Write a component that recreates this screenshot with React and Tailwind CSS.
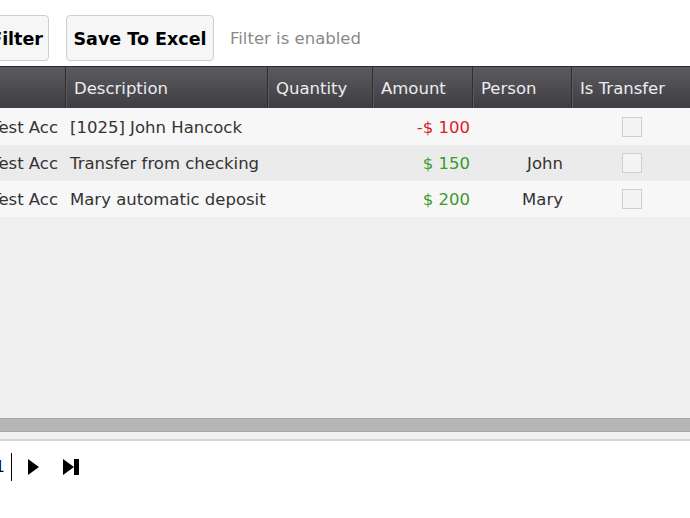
const font = "font-['Tahoma','DejaVu_Sans',sans-serif]";

const rows = [
  { account: "Test Acc", desc: "[1025] John Hancock", amount: "-$ 100", neg: true, person: "" },
  { account: "Test Acc", desc: "Transfer from checking", amount: "$ 150", neg: false, person: "John" },
  { account: "Test Acc", desc: "Mary automatic deposit", amount: "$ 200", neg: false, person: "Mary" },
];

function HeadCell({ w, children }) {
  return (
    <div className={`${w} h-full shrink-0 flex items-center pl-[7px] pt-[3px] border-l border-l-[#5c5c60] border-r border-r-[#2e2e32] text-[#ececf0]`}>
      {children}
    </div>
  );
}

export default function App() {
  return (
    <div className={`w-[690px] h-[518px] overflow-hidden bg-white ${font} text-[16.5px]`}>
      <div className="-ml-[35px]">
        {/* toolbar */}
        <div className="flex items-center h-[66px] pt-[9px]">
          <button className="w-[84px] h-[46px] rounded-[4px] border border-[#cfcfcf] bg-[#f6f6f6] font-bold text-[17.5px] text-black pr-[5px] pt-[3px] text-right">
            Filter
          </button>
          <button className="ml-[17px] w-[148px] h-[46px] rounded-[4px] border border-[#cfcfcf] bg-[#f6f6f6] font-bold text-[17.5px] text-black pt-[3px]">
            Save To Excel
          </button>
          <span className="ml-[16px] pt-[3px] text-[#8a8a8a]">Filter is enabled</span>
        </div>

        {/* grid */}
        <div className="bg-[#f0f0f0] h-[375px] flex flex-col border-t border-[#2a2a2e]">
          <div className="flex h-[41px] bg-gradient-to-b from-[#5b5b60] to-[#3e3e42]">
            <HeadCell w="w-[101px]"></HeadCell>
            <HeadCell w="w-[202px]">Description</HeadCell>
            <HeadCell w="w-[105px]">Quantity</HeadCell>
            <HeadCell w="w-[100px]">Amount</HeadCell>
            <HeadCell w="w-[99px]">Person</HeadCell>
            <HeadCell w="w-[160px]">Is Transfer</HeadCell>
          </div>
          {rows.map((r, i) => (
            <div key={i} className={`flex items-center text-[#333] ${i % 2 ? "bg-[#ebebeb]" : "bg-[#f7f7f7]"} ${i === 0 ? "h-[37px] pt-[3px]" : "h-[36px] pt-[2px]"}`}>
              <div className="w-[101px] shrink-0 text-right pr-[8px] whitespace-nowrap overflow-hidden">{r.account}</div>
              <div className="w-[202px] shrink-0 pl-[4px] whitespace-nowrap">{r.desc}</div>
              <div className="w-[105px] shrink-0"></div>
              <div className={`w-[100px] shrink-0 text-right pr-[3px] ${r.neg ? "text-[#d81e2c]" : "text-[#3a9a2a]"}`}>{r.amount}</div>
              <div className="w-[99px] shrink-0 text-right pr-[9px]">{r.person}</div>
              <div className="w-[160px] shrink-0 pl-[50px] flex items-center -mt-[2px]">
                <span className="w-[20px] h-[20px] border border-[#cfcfcf] bg-[#f4f4f4]"></span>
              </div>
            </div>
          ))}
          <div className="flex-1"></div>
          <div className="h-[14px] bg-[#b6b6b6] border-y border-[#a8a8a8]"></div>
          <div className="h-[9px] bg-[#f0f0f0] border-b-2 border-[#d6d6d6]"></div>
        </div>

        {/* pager */}
        <div className="flex items-center h-[50px] pt-[2px]">
          <span className="w-[40px] text-right text-black">1</span>
          <span className="ml-[6px] w-[1px] h-[28px] bg-black"></span>
          <svg className="ml-[15px]" width="13" height="18" viewBox="0 0 13 18">
            <path d="M1 1 L12 9 L1 17 Z" fill="#000" />
          </svg>
          <svg className="ml-[22px]" width="18" height="18" viewBox="0 0 18 18">
            <path d="M1 1 L12 9 L1 17 Z" fill="#000" />
            <rect x="12" y="1" width="5" height="16" fill="#000" />
          </svg>
        </div>
      </div>
    </div>
  );
}
